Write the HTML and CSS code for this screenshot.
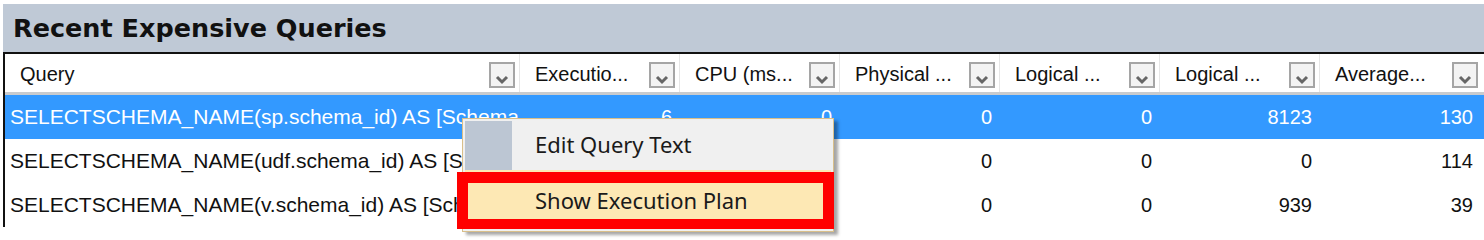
FILE: index.html
```html
<!DOCTYPE html>
<html>
<head>
<meta charset="utf-8">
<link rel="stylesheet" href="styles.css">
</head>
<body>
<div class="panel">
  <div class="titlebar">Recent Expensive Queries</div>
  <div class="grid">
    <div class="hdr">
      <div class="hcell first"><span class="htext">Query</span><span class="dd"><svg viewBox="0 0 22 22" width="22" height="22"><path d="M6 13 L11 18 L16 13" fill="none" stroke="#666" stroke-width="3"/></svg></span></div>
      <div class="hcell"><span class="htext">Executio...</span><span class="dd"><svg viewBox="0 0 22 22" width="22" height="22"><path d="M6 13 L11 18 L16 13" fill="none" stroke="#666" stroke-width="3"/></svg></span></div>
      <div class="hcell"><span class="htext">CPU (ms...</span><span class="dd"><svg viewBox="0 0 22 22" width="22" height="22"><path d="M6 13 L11 18 L16 13" fill="none" stroke="#666" stroke-width="3"/></svg></span></div>
      <div class="hcell"><span class="htext">Physical ...</span><span class="dd"><svg viewBox="0 0 22 22" width="22" height="22"><path d="M6 13 L11 18 L16 13" fill="none" stroke="#666" stroke-width="3"/></svg></span></div>
      <div class="hcell"><span class="htext">Logical ...</span><span class="dd"><svg viewBox="0 0 22 22" width="22" height="22"><path d="M6 13 L11 18 L16 13" fill="none" stroke="#666" stroke-width="3"/></svg></span></div>
      <div class="hcell"><span class="htext">Logical ...</span><span class="dd"><svg viewBox="0 0 22 22" width="22" height="22"><path d="M6 13 L11 18 L16 13" fill="none" stroke="#666" stroke-width="3"/></svg></span></div>
      <div class="hcell last"><span class="htext">Average...</span><span class="dd"><svg viewBox="0 0 22 22" width="22" height="22"><path d="M6 13 L11 18 L16 13" fill="none" stroke="#666" stroke-width="3"/></svg></span></div>
    </div>
    <div class="row selected">
      <div class="cell q">SELECTSCHEMA_NAME(sp.schema_id) AS [Schema_Name]</div>
      <div class="cell n">6</div>
      <div class="cell n">0</div>
      <div class="cell n">0</div>
      <div class="cell n">0</div>
      <div class="cell n">8123</div>
      <div class="cell n">130</div>
    </div>
    <div class="row">
      <div class="cell q">SELECTSCHEMA_NAME(udf.schema_id) AS [Schema_Name]</div>
      <div class="cell n">6</div>
      <div class="cell n">0</div>
      <div class="cell n">0</div>
      <div class="cell n">0</div>
      <div class="cell n">0</div>
      <div class="cell n">114</div>
    </div>
    <div class="row">
      <div class="cell q">SELECTSCHEMA_NAME(v.schema_id) AS [Schema_Name]</div>
      <div class="cell n">6</div>
      <div class="cell n">0</div>
      <div class="cell n">0</div>
      <div class="cell n">0</div>
      <div class="cell n">939</div>
      <div class="cell n">39</div>
    </div>
  </div>
</div>

<div class="menu">
  <div class="gutter"></div>
  <div class="items">
    <div class="item">Edit Query Text</div>
    <div class="item hot">Show Execution Plan</div>
  </div>
</div>
<div class="callout"></div>
</body>
</html>
```
FILE: styles.css
```css
html, body {
  margin: 0;
  padding: 0;
  background: #ffffff;
  width: 1484px;
  height: 233px;
  overflow: hidden;
}
.panel {
  padding: 4px 0 0 3px;
  font-family: "Liberation Sans", Arial, sans-serif;
}
.titlebar {
  height: 48px;
  background: #bfc9d6;
  font-family: "DejaVu Sans", Verdana, sans-serif;
  font-weight: bold;
  font-size: 25.5px;
  color: #111;
  padding-left: 10px;
  display: flex;
  align-items: center;
  box-sizing: border-box;
  padding-bottom: 1px;
}
.grid {
  border-top: 2px solid #111;
  border-left: 2px solid #111;
}
.hdr, .row {
  display: grid;
  grid-template-columns: 515px repeat(5, 160px) 1fr;
}
.hdr {
  height: 38px;
  border-bottom: 3px solid #c9cbce;
  background: #fff;
}
.hcell {
  display: flex;
  align-items: center;
  justify-content: space-between;
  border-right: 1px solid #e6e6e6;
  padding: 0 4px 0 15px;
  font-size: 20px;
  color: #111;
  box-sizing: border-box;
}
.hcell.last {
  border-right: none;
  padding-right: 6px;
}
.htext {
  white-space: nowrap;
  padding-top: 2px;
}
.dd {
  width: 22px;
  height: 22px;
  border: 2px solid #a5a5a5;
  background: #f3f3f3;
  margin-top: 4px;
  display: block;
}
.dd svg {
  display: block;
}
.row {
  height: 44px;
  font-size: 20px;
  color: #111;
}
.row.selected {
  background: #3399ff;
  color: #ffffff;
}
.cell {
  display: flex;
  align-items: center;
  white-space: nowrap;
  overflow: hidden;
}
.cell.q {
  padding-left: 5px;
  font-size: 21px;
}
.cell.n {
  justify-content: flex-end;
  padding-right: 8px;
}
.row .cell:last-child {
  padding-right: 11px;
}

.menu {
  position: absolute;
  left: 462px;
  top: 118px;
  width: 366px;
  height: 108px;
  background: #f0f0f0;
  border: 1px solid #d9bf8a;
  box-shadow: 4px 3px 3px rgba(0, 0, 0, 0.35);
  display: flex;
  padding: 2px;
  box-sizing: content-box;
  font-family: "Noto Sans", "Open Sans", sans-serif;
}
.gutter {
  width: 47px;
  background: #bcc6d3;
  flex: none;
}
.items {
  flex: 1;
  display: flex;
  flex-direction: column;
  gap: 3px;
}
.item {
  height: 46px;
  display: flex;
  align-items: center;
  padding-left: 23px;
  font-size: 22px;
  color: #1a1a1a;
}
.item.hot {
  height: 59px;
  background: #fde8b4;
  margin-left: -47px;
  padding-left: 70px;
}
.callout {
  position: absolute;
  left: 457px;
  top: 172px;
  width: 355px;
  height: 36px;
  border: 11px solid #ff0000;
  border-bottom-width: 10px;
}
```
